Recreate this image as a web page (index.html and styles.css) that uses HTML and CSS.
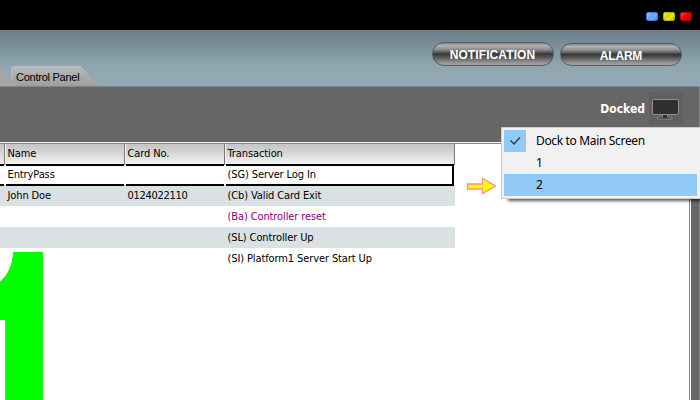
FILE: index.html
```html
<!DOCTYPE html>
<html lang="en">
<head>
<meta charset="utf-8">
<title>Control Panel</title>
<link rel="stylesheet" href="styles.css">
</head>
<body>
<div class="window">
  <div class="titlebar">
    <i class="led blue"></i><i class="led yellow"></i><i class="led red"></i>
  </div>
  <header class="banner">
    <nav class="tabs">
      <svg class="tab-shapes" width="100" height="20" viewBox="0 0 100 20">
        <defs><linearGradient id="tab" x1="0" y1="0" x2="0" y2="1"><stop offset="0" stop-color="#bababa"/><stop offset="1" stop-color="#9e9e9e"/></linearGradient></defs>
        <path d="M0 2L18 20H0z" fill="#a5a5a5"/>
        <path d="M11 15V2l1.500-1.500H81L99 20H16z" fill="url(#tab)"/>
        <path d="M11.500 13V2L13 .5H81" fill="none" stroke="#bdbdbd"/>
      </svg>
      <span class="tab-label">Control Panel</span>
    </nav>
    <div class="actions">
      <button class="pill notification"><span>NOTIFICATION</span></button>
      <button class="pill alarm"><span>ALARM</span></button>
    </div>
  </header>
  <div class="toolbar">
    <span class="docked">Docked</span>
    <span class="monitor"><svg width="34" height="33" viewBox="0 0 34 33">
      <path d="M13.500 22h5v3h4.500v2H8.500v-2h5z" fill="#303030" stroke="#8a8a8a"/>
      <rect x="3.500" y="7.500" width="26" height="15" rx="1.500" fill="#303030" stroke="#8f8f8f"/>
      <path d="M14 23h4v3h-4z" fill="#303030"/>
    </svg></span>
  </div>
  <main class="panel">
    <section class="content">
      <div class="grid">
        <div class="row head"><div></div><div>Name</div><div>Card No.</div><div>Transaction</div></div>
        <div class="row selected"><div></div><div>EntryPass</div><div></div><div>(SG) Server Log In</div></div>
        <div class="row alt"><div></div><div>John Doe</div><div class="num">0124022110</div><div>(Cb) Valid Card Exit</div></div>
        <div class="row reset"><div></div><div></div><div></div><div>(Ba) Controller reset</div></div>
        <div class="row alt"><div></div><div></div><div></div><div>(SL) Controller Up</div></div>
        <div class="row"><div></div><div></div><div></div><div>(SI) Platform1 Server Start Up</div></div>
      </div>
      <div class="counter"><span>1</span></div>
    </section>
    <div class="rail"></div>
  </main>
  <svg class="arrow" width="32" height="18" viewBox="0 0 32 18">
    <path d="M1.500 7h15V1.500L29.500 9l-13 7.500V12h-15z" fill="#ff0" stroke="#ff927a" stroke-width="1.300"/>
  </svg>
  <div class="menu">
    <div class="item"><span class="check"><svg width="22" height="22" viewBox="0 0 22 22"><path d="M6.500 10.500l3.500 3.500 6-6.500" fill="none" stroke="#30424f" stroke-width="1.500"/></svg></span><span class="label">Dock to Main Screen</span></div>
    <div class="item"><span class="label">1</span></div>
    <div class="item active"><span class="label">2</span></div>
  </div>
</div>
</body>
</html>
```
FILE: styles.css
```css
* { box-sizing: border-box; }
body { margin: 0; }
.window { position: relative; width: 700px; height: 400px; overflow: hidden; display: flex; flex-direction: column; background: #666; color: #000; }
.titlebar { height: 30px; flex: none; background: #000; display: flex; justify-content: flex-end; gap: 5px; padding: 12px 8px 0 0; }
.led { width: 12px; height: 9px; border-radius: 2px; border: 1px solid; }
.blue { background: linear-gradient(135deg, #a4c8ff, #5c99f8 45%, #79adff 60%, #3d7fe8); border-color: #3c78d8; }
.yellow { background: linear-gradient(135deg, #f0f060, #d2d200 45%, #e8e830 60%, #b8b800); border-color: #b5b500; }
.red { background: linear-gradient(135deg, #ff5050, #d80000 45%, #e80000 60%, #b00000); border-color: #b80000; }
.banner { height: 56px; flex: none; display: flex; justify-content: space-between; background: linear-gradient(#697e88, #90a6b1 65%, #93a9b4); }
.tabs { width: 100px; padding-top: 36px; display: grid; }
.tab-shapes, .tab-label { grid-area: 1 / 1; }
.tab-label { font: 11px/20px "Liberation Sans", sans-serif; padding: 1px 0 0 16px; white-space: nowrap; letter-spacing: -.25px; }
.actions { display: flex; gap: 6px; padding: 12px 18px 0 0; }
.pill { width: 122px; height: 24px; padding: 0; border: 1px solid #555b5f; border-radius: 12px; color: #fff; font: bold 12px/22px "Liberation Sans", sans-serif; background: linear-gradient(#858585, #b2b2b2 12%, #8c8c8c 30%, #373737 50%, #4b4b4b 60%, #929292 88%, #a5a5a5); }
.pill span { display: block; padding-top: 1px; }
.notification { letter-spacing: .1px; }
.notification span { padding-right: 1px; }
.alarm { height: 23px; margin-top: 1px; letter-spacing: -.2px; }
.toolbar { height: 56px; flex: none; border-top: 1px solid #858585; border-right: 1px solid #8a8a8a; background: #666; display: flex; justify-content: flex-end; padding: 5px 16px 0 0; }
.docked { font: bold 12px/34px "DejaVu Sans Condensed", sans-serif; color: #fff; padding-right: 4px; }
.monitor { width: 34px; height: 33px; background: #625f62; }
.panel { flex: 1; display: flex; min-height: 0; }
.content { width: 691px; background: #fff; border-right: 1px solid #fff; border-top: 1px solid #f0f0f0; box-shadow: inset -1px 1px #858585; overflow: hidden; }
.rail { flex: 1; background: #666; border-right: 1px solid #8a8a8a; }
.grid { width: 455px; padding-top: 1px; font: 11px/22px "DejaVu Sans Condensed", sans-serif; letter-spacing: -.11px; }
.row { display: grid; grid-template-columns: 5px 120px 100px 230px; height: 21px; white-space: nowrap; }
.row > div { padding-left: 2.5px; }
.row .num { letter-spacing: -.3px; }
.row.head { height: 20px; background: linear-gradient(#c4c4c4, #d8d8d8 50%, #f3f3f3); line-height: 20px; }
.head > div { border-right: 1px solid #777; border-bottom: 1px solid #888; border-left: 1px solid #f5f5f5; padding-left: 1.5px; }
.head > div:first-child { border-left: 0; padding: 0; }
.row.selected { margin-bottom: 1px; height: 20px; }
.selected > div { border-top: 2px solid #000; border-bottom: 2px solid #000; margin-left: 1px; margin-right: 1px; padding-left: 1.5px; line-height: 18px; }
.selected > div:first-child { margin-left: 0; padding: 0; }
.selected > div:last-child { border-right: 2px solid #000; }
.alt { background: #d9e1e3; }
.reset { color: #800080; }
/* Oversized door counter, scrolled partly out of view */
.counter { position: relative; width: 50px; height: 148px; margin-top: -17px; overflow: hidden; }
.counter span { display: block; margin-left: -59px; margin-top: -49px; color: #0f0; font: bold 275px/275px "Liberation Sans", sans-serif; }
.counter::before { content: ""; position: absolute; left: 0; top: 0; width: 43px; height: 68px; background: radial-gradient(ellipse 33px 37.700px at -20px 0, #fff 99%, #0f0 100%); }
.arrow { position: absolute; left: 466px; top: 177px; }
.menu { position: absolute; left: 501px; top: 127px; width: 199px; height: 72px; padding: 2px; border: 1px solid #ccc; border-right-width: 0; background: #f1f1f1; box-shadow: 5px 4px 3px -2px rgba(0,0,0,.65); font: 12px/22px "Noto Sans", sans-serif; }
.item { height: 22px; display: flex; margin-right: 1px; }
.item .label { padding-left: 32px; letter-spacing: -.34px; }
.check { width: 22px; height: 22px; background: #91c9f7; }
.check + .label { padding-left: 10px !important; }
.active { background: #91c9f7; }
```
